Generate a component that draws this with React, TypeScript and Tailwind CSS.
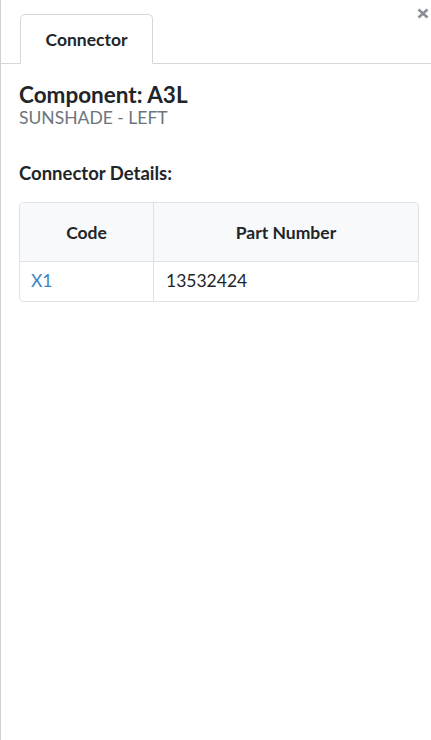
export default function App() {
  return (
    <div
      className="relative min-h-[740px] w-[431px] border-l border-[#d0d0d0] bg-white text-[#212529]"
      style={{ fontFamily: 'Lato, "Open Sans", sans-serif' }}
    >
      <button className="absolute right-[2px] top-[8px] text-[#8a8f96]" aria-label="Close">
        <svg width="12" height="11" viewBox="0 0 12 11">
          <path d="M1.5 1.5 L10.5 9.5 M10.5 1.5 L1.5 9.5" stroke="currentColor" strokeWidth="2.6" strokeLinecap="butt" />
        </svg>
      </button>

      <div className="flex border-b border-[#d6d6d6] pl-[19px] pt-[14px]">
        <div className="-mb-px flex h-[50px] w-[133px] items-center justify-center rounded-t-[5px] border border-b-white border-[#d6d6d6] bg-white pt-[2px] text-[17.5px] font-bold">
          Connector
        </div>
      </div>

      <div className="pl-[18px] pr-[12px] pt-[17px]">
        <h2 className="text-[22.5px] font-bold leading-[27px]">Component: A3L</h2>
        <div className="text-[17.5px] leading-[20px] text-[#6c757d]">SUNSHADE - LEFT</div>

        <h3 className="mt-[34px] text-[18.5px] font-bold leading-[22px]">Connector Details:</h3>

        <div className="mt-[18px] overflow-hidden rounded-[4px] border border-[#dee2e6] text-[17.5px]">
          <div className="flex h-[59px] border-b border-[#dee2e6] bg-[#f8f9fa] font-bold">
            <div className="flex w-[134px] items-center justify-center border-r border-[#dee2e6] pt-[2px]">Code</div>
            <div className="flex flex-1 items-center justify-center pt-[2px]">Part Number</div>
          </div>
          <div className="flex h-[39px]">
            <div className="flex w-[134px] items-center border-r border-[#dee2e6] px-[11px] text-[#3c84c8]">X1</div>
            <div className="flex flex-1 items-center px-[12px]">13532424</div>
          </div>
        </div>
      </div>
    </div>
  );
}
